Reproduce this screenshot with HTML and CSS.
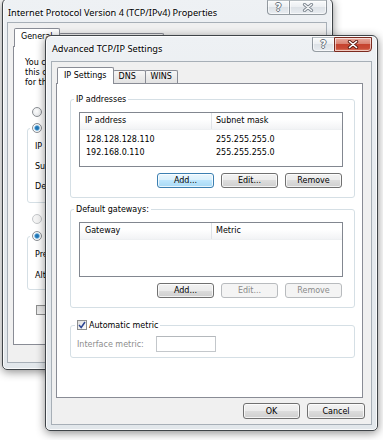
FILE: index.html
```html
<!DOCTYPE html>
<html lang="en">
<head>
  <meta charset="UTF-8">
  <meta name="viewport" content="width=device-width, initial-scale=1.0">
  <link rel="stylesheet" href="styles.css">
  <title>Advanced TCP/IP Settings</title>
</head>
<body>
  <div class="desktop">

    <!-- window behind: IPv4 properties -->
    <section class="window window-back">
      <header class="titlebar">
        <span class="title">Internet Protocol Version 4 (TCP/IPv4) Properties</span>
        <div class="caption-buttons">
          <span class="cap-btn cap-help">?</span>
          <span class="cap-btn cap-close">
            <svg width="12" height="9" viewBox="0 0 12 9">
              <path d="M2.5 1.5 L9.5 7.5 M9.5 1.5 L2.5 7.5" stroke="#7d868f" stroke-width="3.2" stroke-linecap="round" fill="none"/>
              <path d="M2.5 1.5 L9.5 7.5 M9.5 1.5 L2.5 7.5" stroke="#f5f7f9" stroke-width="1.4" stroke-linecap="round" fill="none"/>
            </svg>
          </span>
        </div>
      </header>
      <div class="client">
        <div class="tabs">
          <span class="tab selected">General</span>
          <span class="tab">Alternate Configuration</span>
        </div>
        <div class="tab-page general-page">
          <p class="intro">You can get IP settings assigned automatically if your network supports<br>this capability. Otherwise, you need to ask your network administrator<br>for the appropriate IP settings.</p>
          <label class="option first-option"><span class="radio"></span>Obtain an IP address automatically</label>
          <fieldset class="group ip-group">
            <legend class="option"><span class="radio checked"></span>Use the following IP address:</legend>
            <div class="field-row">IP address:</div>
            <div class="field-row">Subnet mask:</div>
            <div class="field-row">Default gateway:</div>
          </fieldset>
          <label class="option disabled dns-auto"><span class="radio"></span>Obtain DNS server address automatically</label>
          <fieldset class="group dns-group">
            <legend class="option"><span class="radio checked"></span>Use the following DNS server addresses:</legend>
            <div class="field-row tall">Preferred DNS server:</div>
            <div class="field-row tall">Alternate DNS server:</div>
          </fieldset>
          <label class="option validate"><span class="checkbox"></span>Validate settings upon exit</label>
        </div>
      </div>
    </section>

    <!-- window in front: advanced settings -->
    <section class="window window-front">
      <header class="titlebar">
        <span class="title">Advanced TCP/IP Settings</span>
        <div class="caption-buttons">
          <span class="cap-btn cap-help">?</span>
          <span class="cap-btn cap-close active">
            <svg width="12" height="9" viewBox="0 0 12 9">
              <path d="M2.5 1.5 L9.5 7.5 M9.5 1.5 L2.5 7.5" stroke="#5b1d14" stroke-width="3.4" stroke-linecap="round" fill="none"/>
              <path d="M2.5 1.5 L9.5 7.5 M9.5 1.5 L2.5 7.5" stroke="#ffffff" stroke-width="1.6" stroke-linecap="round" fill="none"/>
            </svg>
          </span>
        </div>
      </header>
      <div class="client">
        <div class="tabs">
          <span class="tab selected">IP Settings</span>
          <span class="tab">DNS</span>
          <span class="tab">WINS</span>
        </div>
        <div class="tab-page settings-page">

          <fieldset class="group list-group">
            <legend>IP addresses</legend>
            <div class="listview">
              <div class="lv-header"><span class="lv-col">IP address</span><span class="lv-col">Subnet mask</span></div>
              <div class="lv-rows">
                <div class="lv-row"><span class="lv-col">128.128.128.110</span><span class="lv-col">255.255.255.0</span></div>
                <div class="lv-row"><span class="lv-col">192.168.0.110</span><span class="lv-col">255.255.255.0</span></div>
              </div>
            </div>
            <div class="button-row">
              <button class="btn default">Add...</button>
              <button class="btn">Edit...</button>
              <button class="btn">Remove</button>
            </div>
          </fieldset>

          <fieldset class="group list-group">
            <legend>Default gateways:</legend>
            <div class="listview">
              <div class="lv-header"><span class="lv-col">Gateway</span><span class="lv-col">Metric</span></div>
              <div class="lv-rows"></div>
            </div>
            <div class="button-row">
              <button class="btn">Add...</button>
              <button class="btn" disabled>Edit...</button>
              <button class="btn" disabled>Remove</button>
            </div>
          </fieldset>

          <fieldset class="group metric-group">
            <legend class="option">
              <span class="checkbox">
                <svg width="8" height="8" viewBox="0 0 8 8">
                  <path d="M1 4 L3.2 6.5 L7 1" stroke="#2c4592" stroke-width="1.5" fill="none"/>
                </svg>
              </span>Automatic metric
            </legend>
            <div class="metric-row">
              <span class="metric-label">Interface metric:</span>
              <span class="metric-input"></span>
            </div>
          </fieldset>

        </div>
        <div class="dialog-buttons">
          <button class="btn">OK</button>
          <button class="btn wide">Cancel</button>
        </div>
      </div>
    </section>

  </div>
</body>
</html>
```

FILE: styles.css
```css
:root {
  --frame-line: #3f4448;
  --client-bg: #f0f0f0;
  --tab-border: #898c95;
  --group-border: #d5dfe5;
  --list-border: #828790;
  --text-disabled: #8d8d8d;
  --ui-font: "DejaVu Sans", Verdana, sans-serif;
  --title-font: "Noto Sans", "Open Sans", sans-serif;
}

* {
  margin: 0;
  padding: 0;
  box-sizing: border-box;
}

body {
  background: #fff;
  font-family: var(--ui-font);
  font-size: 8px;
  color: #000;
}

.desktop {
  position: relative;
  width: 383px;
  height: 440px;
  overflow: hidden;
  background: #fff;
}

/* windows sit on a free desktop, so they are placed by coordinates */
.window {
  position: absolute;
  display: flex;
  flex-direction: column;
  border: 1px solid var(--frame-line);
  border-radius: 6px 6px 5px 5px;
  background: linear-gradient(#eef1f4, #e6eaee 40%, #e2e7eb);
  box-shadow: inset 0 0 0 1px rgba(255, 255, 255, 0.8), 0 2px 10px rgba(0, 0, 0, 0.45);
}

.window-back {
  z-index: 1;
  left: 2px;
  top: -2px;
  width: 331px;
  height: 372px;
  padding: 0 5px 6px 4px;
}

.window-front {
  z-index: 2;
  left: 45px;
  top: 35px;
  width: 333px;
  height: 396px;
  padding: 0 5px 5px 5px;
}

.titlebar {
  display: flex;
  align-items: flex-start;
  flex: none;
}

.window-back .titlebar { height: 23px; }
.window-front .titlebar { height: 25px; }

.title {
  font-family: var(--title-font);
  font-size: 9.2px;
  line-height: 12px;
  white-space: nowrap;
  text-shadow: 0 0 4px #fff, 0 0 2px #fff;
}

.window-back .title { padding: 8px 0 0 1px; }
.window-front .title { padding: 7px 0 0 1px; }

.caption-buttons {
  display: flex;
  margin: 1px 0 0 auto;
}

.cap-btn {
  display: flex;
  align-items: center;
  justify-content: center;
  height: 15px;
  border: 1px solid rgba(70, 80, 90, 0.55);
  border-top-color: rgba(70, 80, 90, 0.3);
  box-shadow: inset 0 0 0 1px rgba(255, 255, 255, 0.6);
}

.cap-help {
  width: 22px;
  border-right: none;
  border-radius: 0 0 0 4px;
  background: linear-gradient(#f8fafb, #eceff2 45%, #dde2e7 50%, #e9edf1);
  font-family: "DejaVu Sans", sans-serif;
  font-weight: bold;
  font-size: 10px;
  color: #fff;
  text-shadow: 1px 0 0 #6b747d, -1px 0 0 #6b747d, 0 1px 0 #6b747d, 0 -1px 0 #6b747d;
}

.cap-close {
  width: 38px;
  border-radius: 0 0 4px 0;
  background: linear-gradient(#f8fafb, #eceff2 45%, #dde2e7 50%, #e9edf1);
}

.cap-close.active {
  border-color: #7a2a1f;
  background: linear-gradient(#e9ab9f, #d98373 45%, #c5432f 50%, #c94b37 80%, #e08a70);
}

.client {
  flex: 1;
  display: flex;
  flex-direction: column;
  background: var(--client-bg);
  border: 1px solid #a7afb7;
}

.window-back .client { padding: 5px 6px 0 5px; }
.window-front .client { padding: 5px 8px 0 4px; }

/* tabs */
.tabs {
  position: relative;
  z-index: 1;
  display: flex;
  align-items: flex-end;
  height: 16px;
  padding-left: 1px;
}

.window-back .tabs { height: 18px; }

.tab {
  height: 13px;
  min-width: 33px;
  margin-right: -1px;
  padding: 0 5px;
  border: 1px solid var(--tab-border);
  border-bottom: none;
  border-radius: 2px 2px 0 0;
  background: linear-gradient(#f7f7f7, #ebebeb 50%, #e3e3e3);
  line-height: 12px;
  white-space: nowrap;
}

.tab.selected {
  height: 17px;
  margin-bottom: -1px;
  padding: 0 6px;
  background: #fff;
  line-height: 15px;
}

.window-back .tab.selected { height: 19px; line-height: 16px; }

.tab-page {
  border: 1px solid var(--tab-border);
  background: #fff;
}

.settings-page {
  height: 315px;
  padding: 10px 7px 0 13px;
}

/* group boxes */
.group {
  min-width: 0;
  border: 1px solid var(--group-border);
  border-radius: 3px;
}

.group legend {
  padding: 0 2px;
  line-height: 11px;
}

.list-group {
  padding: 7px 11px 9px 8px;
  & legend { margin-left: -5px; }
}

.list-group + .list-group { margin-top: 6px; }

.listview {
  height: 55px;
  border: 1px solid var(--list-border);
  background: #fff;
}

.lv-header {
  display: flex;
  height: 17px;
  line-height: 16px;
  border-bottom: 1px solid #eef0f2;
  background: linear-gradient(#fff, #fff 40%, #f2f3f5);
  & .lv-col:first-child { border-right: 1px solid #dfe2e6; }
}

.lv-rows { padding-top: 3px; }

.lv-row {
  display: flex;
  height: 13px;
  line-height: 13px;
}

.lv-col { padding-left: 5px; }
.lv-col:first-child { width: 132px; padding-left: 5px; }
.lv-col + .lv-col { padding-left: 4px; }
.lv-row .lv-col:first-child { padding-left: 6px; }

.button-row {
  display: flex;
  justify-content: flex-end;
  gap: 7px;
  margin: 6px 1px 0 0;
}

.btn {
  width: 57px;
  height: 15px;
  font: inherit;
  color: #000;
  border: 1px solid #707070;
  border-radius: 3px;
  background: linear-gradient(#f2f2f2, #ebebeb 50%, #dddddd 50%, #cfcfcf);
  box-shadow: inset 0 0 0 1px rgba(255, 255, 255, 0.75);
}

.btn.default {
  border-color: #3c7fb1;
  background: linear-gradient(#eaf6fd, #d9f0fc 50%, #bee6fd 50%, #a7d9f5);
}

.btn:disabled {
  color: #8a8a8a;
  border-color: #b8bbbe;
  background: #f4f4f4;
  box-shadow: none;
}

.metric-group {
  margin-top: 11px;
  padding: 5px 8px 5px 6px;
  & legend {
    display: flex;
    align-items: center;
    gap: 2px;
    height: 12px;
    margin-left: -2px;
  }
}

.metric-row {
  display: flex;
  align-items: center;
  height: 16px;
}

.metric-label {
  width: 79px;
  color: var(--text-disabled);
}

.metric-input {
  width: 60px;
  height: 16px;
  border: 1px solid #c3c7cb;
  border-top-color: #b4b8bc;
  background: #fff;
}

.dialog-buttons {
  display: flex;
  justify-content: flex-end;
  gap: 7px;
  margin: 5px -2px 0 0;
  & .btn { height: 16px; }
  & .wide { width: 58px; }
}

/* radios and checkboxes */
.option {
  display: flex;
  align-items: center;
  gap: 4px;
  height: 10px;
  line-height: 10px;
  white-space: nowrap;
}

.option.disabled { color: var(--text-disabled); }

.radio {
  flex: none;
  width: 10px;
  height: 10px;
  border: 1px solid #8b8f94;
  border-radius: 50%;
  background: radial-gradient(circle at 50% 40%, #fff, #e0e3e6);
}

.radio.checked {
  background: radial-gradient(circle, #1d6aa8 0, #2f86c4 1.8px, #9ccdee 2.6px, #fff 3.2px, #e0e3e6);
}

.disabled .radio {
  border-color: #c4c7ca;
  background: #f4f4f4;
}

.checkbox {
  flex: none;
  display: flex;
  align-items: center;
  justify-content: center;
  width: 10px;
  height: 10px;
  border: 1px solid #8e8f8f;
  background: linear-gradient(135deg, #dedede, #fdfdfd);
}

/* page behind */
.general-page {
  display: flex;
  flex-direction: column;
  align-items: flex-start;
  height: 299px;
  padding: 11px 7px 0 11px;
  overflow: hidden;
  white-space: nowrap;
}

.intro { line-height: 10px; }

.first-option { margin: 19px 0 0 7px; }

.ip-group {
  align-self: stretch;
  margin: 6px 0 0 2px;
  padding: 4px 7px 5px 7px;
  & legend { margin-left: -5px; height: 10px; line-height: 10px; }
}

.field-row {
  height: 20px;
  line-height: 20px;
}

.field-row.tall {
  height: 21px;
  line-height: 21px;
}

.dns-auto { margin: 11px 0 0 7px; }

.dns-group {
  align-self: stretch;
  margin: 7px 0 0 2px;
  padding: 3px 7px 3px 7px;
  & legend { margin-left: -5px; height: 10px; line-height: 10px; }
}

.validate { margin: 15px 0 0 11px; }
```
